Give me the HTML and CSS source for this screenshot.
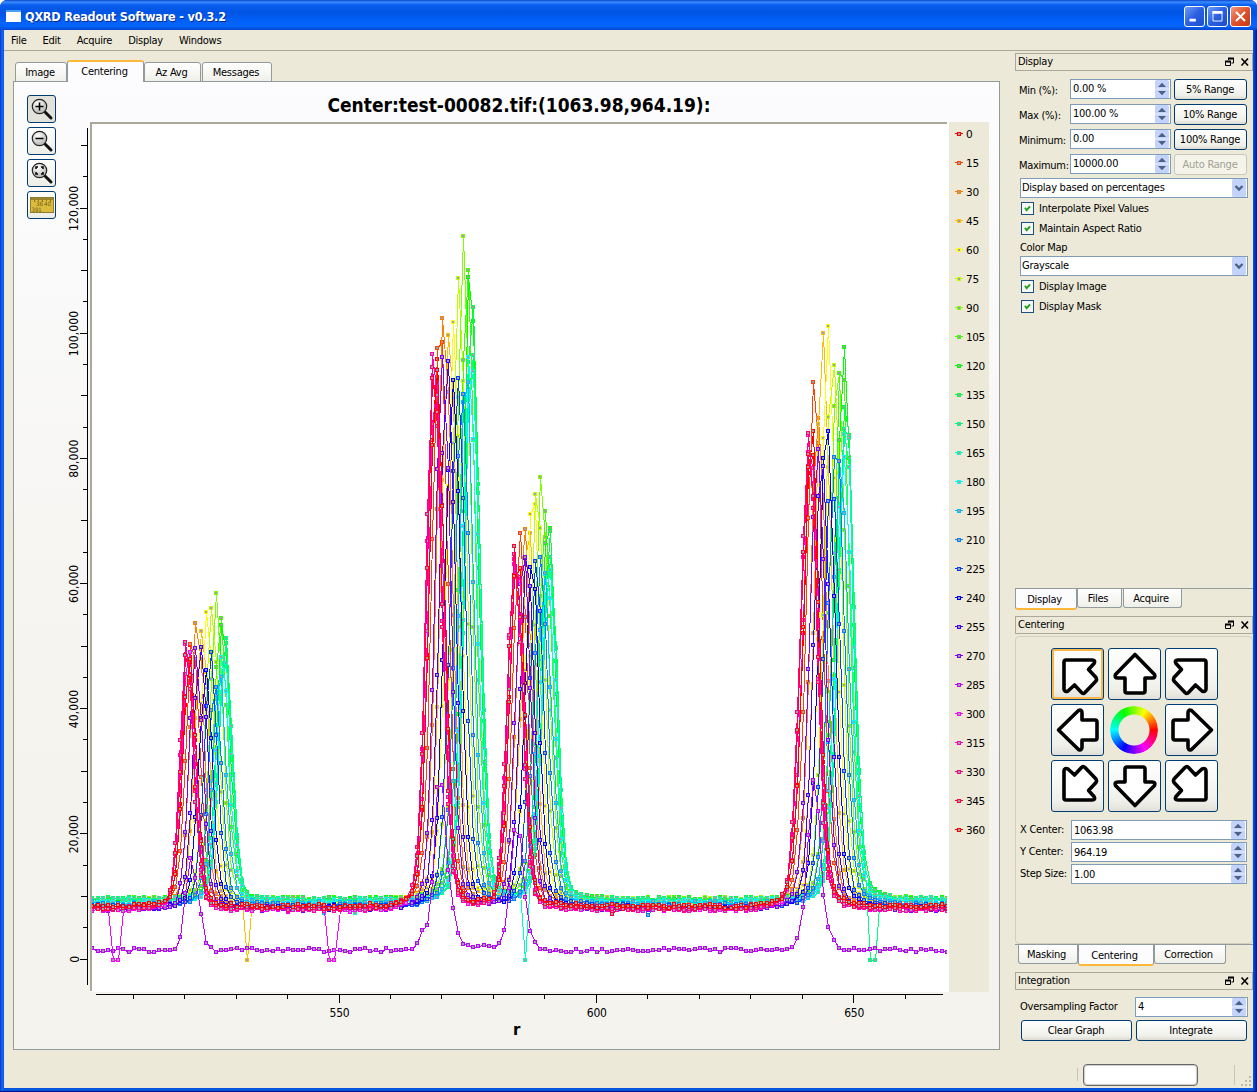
FILE: index.html
```html
<!DOCTYPE html>
<html lang="en">
<head>
<meta charset="utf-8">
<title>QXRD Readout Software - v0.3.2</title>
<link rel="stylesheet" href="styles.css">
</head>
<body>
<svg class="defs" width="0" height="0">
  <defs>
    <radialGradient id="lens" cx=".4" cy=".3" r=".8"><stop offset="0" stop-color="#fff"/><stop offset="1" stop-color="#a8a8a4"/></radialGradient>
    <symbol id="glass" viewBox="0 0 24 24">
      <path d="M14.5 14.5 21 21" stroke="#111" stroke-width="3" stroke-linecap="round"/>
      <circle cx="9.5" cy="9.5" r="7.2" fill="url(#lens)" stroke="#222" stroke-width="1.2"/>
    </symbol>
    <symbol id="arrow" viewBox="0 0 48 48"><path d="M24 4.5 43.500 24.5Q45 28 41 28H34V41Q34 43 32 43H16Q14 43 14 41V28H7Q3 28 4.500 24.5Z" fill="#fff" stroke="#000" stroke-width="3.600" stroke-linejoin="round"/></symbol>
    <symbol id="diag" viewBox="0 0 48 48"><path d="M12 10H38Q42 10 40 13.500L34.500 19.500 42 27.500Q43 29.500 42 31L31 42.500Q29 44.500 27.500 42.500L20.500 35 14 41Q10 42.500 10 39V12Q10 10 12 10Z" fill="#fff" stroke="#000" stroke-width="3.600" stroke-linejoin="round"/></symbol>
    <symbol id="dockicons" viewBox="0 0 24 10">
      <path d="M3.500 3V1.500H8.500V6H6.500M.5 4.500H5.500V8.500H.5Z" fill="none" stroke="#000"/>
      <path d="M3 1.500H9M0 4.500H6" stroke="#000" stroke-width="2"/>
      <path d="M16.500 1.500 23 8.500M23 1.500 16.500 8.500" stroke="#000" stroke-width="1.600"/>
    </symbol>
    <symbol id="spin" viewBox="0 0 14 18">
      <path d="M0 1.500Q0 0 1.500 0H12.500Q14 0 14 1.500V16.500Q14 18 12.500 18H1.500Q0 18 0 16.500Z" fill="#c3d3fb"/>
      <path d="M0 9H14" stroke="#e8eefe"/>
      <path d="M3 7 7 2.800 11 7ZM3 11 7 15.200 11 11Z" fill="#4d6185"/>
    </symbol>
    <symbol id="drop" viewBox="0 0 14 18">
      <rect width="14" height="18" rx="1.500" fill="#c3d3fb"/>
      <path d="M3.500 7 7 10.500 10.500 7" fill="none" stroke="#4d6185" stroke-width="2.400"/>
    </symbol>
    <symbol id="check" viewBox="0 0 13 13"><path d="M3 5 5 8 9 3.500" fill="none" stroke="#21a121" stroke-width="2.200" transform="translate(.5 .5)"/></symbol>
  </defs>
</svg>
<div class="window">
  <header class="titlebar">
    <span class="appicon"></span><h1>QXRD Readout Software - v0.3.2</h1>
    <div class="winbtns">
      <svg viewBox="0 0 21 21"><path d="M5 14.500H12" stroke="#fff" stroke-width="3"/></svg>
      <svg viewBox="0 0 21 21"><path d="M5.500 5.500H15.500V15.500H5.500Z" fill="none" stroke="#fff"/><path d="M5 6H16" stroke="#fff" stroke-width="3"/></svg>
      <svg class="close" viewBox="0 0 21 21"><path d="M5.500 5.500 15.500 15.500M15.500 5.500 5.500 15.500" stroke="#fff" stroke-width="2.200"/></svg>
    </div>
  </header>
  <div class="client">
    <nav class="menubar"><span>File</span><span>Edit</span><span>Acquire</span><span>Display</span><span>Windows</span></nav>
    <div class="body">
      <main class="central">
        <div class="tabs"><span class="tab t-image">Image</span><span class="tab active t-center">Centering</span><span class="tab t-az">Az Avg</span><span class="tab t-msg">Messages</span></div>
        <section class="pane">
          <div class="toolbar">
            <button class="tool on"><svg width="24" height="24"><use href="#glass"/><path d="M5.500 9.500H13.500M9.500 5.500V13.500" stroke="#000" stroke-width="1.600"/></svg></button>
            <button class="tool"><svg width="24" height="24"><use href="#glass"/><path d="M5.500 9.500H13.500" stroke="#000" stroke-width="1.600"/></svg></button>
            <button class="tool"><svg width="24" height="24"><use href="#glass"/><path d="M6 8V6H8M11 6H13V8M13 11V13H11M8 13H6V11" fill="none" stroke="#000" stroke-width="1.500"/></svg></button>
            <button class="tool"><svg width="24" height="24"><rect x=".5" y="4.500" width="23" height="15" fill="#dcba3c" stroke="#8f7d2b"/><path d="M1 6H23" stroke="#9c8630" stroke-width="2"/><path d="M4.500 6V9M8.500 6V8M12.500 6V9M16.500 6V8M20.500 6V9" stroke="#85742a"/><text x="6" y="12.500" class="rule">36</text><text x="14" y="12.500" class="rule">40</text><text x="1.500" y="18.500" class="rule">391</text></svg></button>
          </div>
          <svg id="plot" class="plot" width="930" height="950" viewBox="60 92 930 950"></svg>
        </section>
      </main>
      <aside class="docks">
        <div class="dockhead"><span>Display</span><svg width="24" height="10"><use href="#dockicons"/></svg></div>
        <section class="display">
          <div class="range"><label>Min (%):</label><div class="field">0.00 %<svg><use href="#spin"/></svg></div><button class="push">5% Range</button></div>
          <div class="range"><label>Max (%):</label><div class="field">100.00 %<svg><use href="#spin"/></svg></div><button class="push">10% Range</button></div>
          <div class="range"><label>Minimum:</label><div class="field">0.00<svg><use href="#spin"/></svg></div><button class="push">100% Range</button></div>
          <div class="range"><label>Maximum:</label><div class="field">10000.00<svg><use href="#spin"/></svg></div><button class="push off">Auto Range</button></div>
          <div class="field combo">Display based on percentages<svg><use href="#drop"/></svg></div>
          <div class="checkrow"><svg><use href="#check"/></svg>Interpolate Pixel Values</div>
          <div class="checkrow"><svg><use href="#check"/></svg>Maintain Aspect Ratio</div>
          <div class="caption">Color Map</div>
          <div class="field combo">Grayscale<svg><use href="#drop"/></svg></div>
          <div class="checkrow"><svg><use href="#check"/></svg>Display Image</div>
          <div class="checkrow"><svg><use href="#check"/></svg>Display Mask</div>
        </section>
        <div class="btabs"><span class="btab active b-disp">Display</span><span class="btab b-files">Files</span><span class="btab b-acq">Acquire</span></div>
        <div class="dockhead"><span>Centering</span><svg width="24" height="10"><use href="#dockicons"/></svg></div>
        <section class="centering">
          <div class="pad">
            <button class="dir focus"><svg><use href="#diag"/></svg></button>
            <button class="dir"><svg><use href="#arrow"/></svg></button>
            <button class="dir"><svg class="fliph"><use href="#diag"/></svg></button>
            <button class="dir"><svg class="left"><use href="#arrow"/></svg></button>
            <div class="wheel"></div>
            <button class="dir"><svg class="right"><use href="#arrow"/></svg></button>
            <button class="dir"><svg class="flipv"><use href="#diag"/></svg></button>
            <button class="dir"><svg class="down"><use href="#arrow"/></svg></button>
            <button class="dir"><svg class="down"><use href="#diag"/></svg></button>
          </div>
          <div class="coord"><label>X Center:</label><div class="field">1063.98<svg><use href="#spin"/></svg></div></div>
          <div class="coord"><label>Y Center:</label><div class="field">964.19<svg><use href="#spin"/></svg></div></div>
          <div class="coord"><label>Step Size:</label><div class="field">1.00<svg><use href="#spin"/></svg></div></div>
        </section>
        <div class="btabs second"><span class="btab b-mask">Masking</span><span class="btab active b-cent">Centering</span><span class="btab b-corr">Correction</span></div>
        <div class="dockhead"><span>Integration</span><svg width="24" height="10"><use href="#dockicons"/></svg></div>
        <section class="integration">
          <div class="over"><label>Oversampling Factor</label><div class="field">4<svg><use href="#spin"/></svg></div></div>
          <div class="pair"><button class="push">Clear Graph</button><button class="push">Integrate</button></div>
        </section>
      </aside>
    </div>
    <footer class="status"><i class="sep"></i><div class="progress"></div><i class="sep tall"></i>
      <svg class="grip" width="12" height="12"><path d="M8 1h2v2H8zM4 5h2v2H4zM8 5h2v2H8zM0 9h2v2H0zM4 9h2v2H4zM8 9h2v2H8z" fill="#bdb9a8"/></svg></footer>
  </div>
</div>
<script src="plot.js"></script>
</body>
</html>
```
FILE: styles.css
```css
* { box-sizing: border-box; }
body {
  margin: 0;
  width: 1257px;
  height: 1092px;
  overflow: hidden;
  font: 11px/14px "DejaVu Sans Condensed", "DejaVu Sans", sans-serif;
  font-stretch: condensed;
  letter-spacing: -0.25px;
  color: #000;
  background: #fff;
}
button { font: inherit; letter-spacing: inherit; padding: 0; margin: 0; color: inherit; }
.defs { display: block; height: 0; position: absolute; }
.window {
  height: 1092px;
  display: flex;
  flex-direction: column;
  background: linear-gradient(90deg, #0831d9 0, #166aee 2px, #0855dd 4px, #0855dd 1253px, #0046d8 1254px, #00138c 1257px);
  border-radius: 7px 7px 0 0;
  border-bottom: 1px solid #00138c;
  overflow: hidden;
}
.titlebar {
  height: 30px;
  display: flex;
  align-items: center;
  padding: 3px 6px 0 6px;
  background: linear-gradient(#0946c8 0, #3a8cff 2px, #0a5eee 5px, #0054e3 12px, #0060f8 20px, #0566ff 26px, #0347cf 30px);
}
.appicon { width: 15px; height: 12px; background: #fff; border-top: 2px solid #4aa0f0; margin-top: -2px; }
h1 {
  margin: 0 0 0 4px;
  font: bold 12.500px/16px "DejaVu Sans Condensed", "DejaVu Sans", sans-serif;
  font-stretch: condensed;
  letter-spacing: -0.180px;
  color: #fff;
  text-shadow: 1px 1px #0a2a90;
  flex: 1;
}
.winbtns { display: flex; gap: 2px; }
.winbtns svg { width: 21px; height: 21px; border: 1px solid #fff; border-radius: 3px; background: linear-gradient(135deg, #6f9cf6, #2a5fe0 50%, #1c4fd0); }
.winbtns .close { background: linear-gradient(135deg, #f09b80, #e0522c 50%, #c83a14); }
.client {
  flex: 1;
  margin: 0 4px 3px 4px;
  background: #ece9d8;
  display: flex;
  flex-direction: column;
}
.menubar { height: 21px; border-bottom: 1px solid #aca899; display: flex; gap: 16px; padding: 4px 7px 2px; }
.body { height: 999px; display: flex; justify-content: space-between; }
.central { width: 987px; margin-left: 9px; display: flex; flex-direction: column; }
.tabs { height: 31px; padding: 9px 0 0 2px; display: flex; align-items: flex-end; z-index: 1; margin-bottom: -1px; }
.tab {
  height: 20px;
  border: 1px solid #919b9c;
  border-radius: 3px 3px 0 0;
  background: linear-gradient(#fff, #f0f0ea);
  text-align: center;
  line-height: 20px;
  padding-right: 2px;
}
.tab.active { height: 22px; background: #fcfcfe; border-bottom: 0; border-top: 2px solid #fdb83a; line-height: 19px; }
.t-image { width: 52px; }
.t-center { width: 77px; }
.t-az { width: 57px; }
.t-msg { width: 70px; margin-left: 1px; }
.pane {
  flex: 1;
  border: 1px solid #919b9c;
  background: linear-gradient(#fcfcfe, #f4f3ee 70%);
  display: flex;
  padding-top: 10px;
}
.toolbar { width: 46px; padding: 3px 0 0 13px; display: flex; flex-direction: column; gap: 4px; }
.tool { width: 29px; height: 28px; border: 1px solid #003c74; border-radius: 3px; background: linear-gradient(#fff, #edede6); display: flex; align-items: center; justify-content: center; }
.tool.on { background: #e3e2da; }
.rule { font: 6px "DejaVu Sans Condensed", sans-serif; fill: #6e5f1f; letter-spacing: 0; }
.plot { display: block; }
.plot .title { font: bold 19px "DejaVu Sans Condensed", "DejaVu Sans", sans-serif; font-stretch: condensed; letter-spacing: 0; }
.plot .tick { font: 12px "DejaVu Sans Condensed", "DejaVu Sans", sans-serif; font-stretch: condensed; }
.plot .leg { font: 10.500px "DejaVu Sans", sans-serif; }
.plot .axis { font: bold 15px "DejaVu Sans", sans-serif; }
.docks { width: 238px; padding-top: 2px; display: flex; flex-direction: column; }
.dockhead { height: 18px; border: 1px solid #aca899; display: flex; align-items: center; justify-content: space-between; padding: 0 3px 0 2px; flex: none; }
.display { height: 517px; padding: 8px 5px 0 5px; }
.range { height: 25px; display: flex; }
.range:nth-child(4) { height: 24px; }
.range label { width: 50px; line-height: 23px; white-space: nowrap; letter-spacing: -0.3px; padding-left: 0; margin-left: -1px; margin-right: 1px; }
.field {
  height: 20px;
  border: 1px solid #7f9db9;
  background: #fff;
  display: flex;
  justify-content: space-between;
  padding: 0 1px 0 2px;
  line-height: 18px;
  flex: 1;
}
.field svg { width: 14px; height: 18px; }
.range .field { width: 101px; flex: none; }
.push { width: 73px; height: 21px; margin-left: 3px; border: 1px solid #003c74; border-radius: 3px; background: linear-gradient(#fff, #f0f0ea 80%, #dcdad0); padding: 1px 1px 0 0; }
.push.off { border-color: #c9c7ba; color: #a1a192; background: #f5f4ea; }
.combo { flex: none; width: 228px; margin-bottom: 1px; padding-left: 1px; }
.checkrow { height: 20px; display: flex; align-items: center; gap: 5px; padding-left: 1px; }
.checkrow svg { width: 13px; height: 13px; border: 1px solid #1c5180; background: #f6f6f2; margin-top: -1px; }
.caption { height: 17px; line-height: 17px; letter-spacing: -0.3px; }
.btabs { height: 28px; border-top: 1px solid #919b9c; display: flex; align-items: flex-start; flex: none; }
.btab { height: 19px; border: 1px solid #919b9c; border-top: 0; border-radius: 0 0 3px 3px; background: linear-gradient(#fff, #f0f0ea); text-align: center; line-height: 19px; padding-right: 3px; }
.btab.active { height: 21px; background: #fcfcfe; border-bottom: 2px solid #fdb83a; line-height: 21px; }
.b-disp { width: 62px; }
.b-files { width: 45px; }
.b-acq { width: 59px; margin-left: 1px; }
.b-mask { width: 60px; }
.b-cent { width: 76px; }
.b-corr { width: 72px; }
.second { padding-left: 3px; }
.centering { height: 308px; margin-top: 2px; border: 1px solid #d0d0bf; border-radius: 4px; padding: 11px 5px 0 4px; flex: none; }
.pad { display: grid; grid-template-columns: repeat(3, 53px); grid-auto-rows: 52px; gap: 4px; justify-content: center; height: 172px; padding-left: 2px; }
.dir { border: 1px solid #003c74; border-radius: 3px; background: linear-gradient(#fff, #f0f0ea 80%, #e2e0d8); display: flex; align-items: center; justify-content: center; }
.dir svg { width: 48px; height: 48px; }
.dir.focus { box-shadow: inset 0 0 0 2px #f9b94a; }
.fliph { transform: scaleX(-1); }
.flipv { transform: scaleY(-1); }
.down { transform: rotate(180deg); }
.left { transform: rotate(-90deg); }
.right { transform: rotate(90deg); }
.wheel { width: 48px; height: 48px; margin: 2px; border-radius: 50%; background: conic-gradient(from 90deg, #f00, #f0f, #00f, #0ff, #0f0, #ff0, #f00); -webkit-mask: radial-gradient(circle, transparent 15px, #000 16px); mask: radial-gradient(circle, transparent 15px, #000 16px); }
.coord { height: 22px; display: flex; }
.coord label { width: 51px; line-height: 19px; white-space: nowrap; }
.coord .field { line-height: 19px; }
.integration { padding: 7px 5px 0 5px; }
.over { display: flex; height: 23px; }
.over label { width: 115px; line-height: 20px; }
.pair { display: flex; gap: 4px; padding-left: 1px; }
.pair .push { width: 111px; margin: 0; }
.status { flex: 1; display: flex; align-items: center; padding: 11px 0 0 1073px; }
.sep { width: 1px; height: 13px; background: #c8c5b4; }
.sep.tall { height: 20px; margin-left: 36px; }
.progress { width: 115px; height: 22px; margin-left: 5px; border: 1px solid #686868; border-radius: 4px; background: #fff; box-shadow: inset 0 0 1px 1px #ccc; }
.grip { margin: 12px 0 0 6px; }
```
FILE: plot.js
```js
(function () {
  var out = [];
  var X = function (r) { return 339.5 + (r - 550) * 5.146; };
  var Y = function (v) { return 959.5 - v * 0.006258; };
  var seed = 7;
  function rnd() { seed = (seed * 16807) % 2147483647; return seed / 2147483647 - 0.5; }

  // Peak tops as screen heights, one for each 15 degree sector from 0 to 360.
  var tops = [
    [650, 633, 615, 626, 600, 593, 600, 605, 616, 628, 640, 645, 655, 665, 675, 650, 664, 638, 648, 0, 644, 646, 642, 650, 650],
    [350, 315, 315, 318, 338, 284, 245, 250, 272, 300, 330, 348, 350, 370, 376, 362, 362, 358, 356, 0, 354, 350, 338, 348, 352],
    [546, 544, 524, 522, 480, 480, 474, 502, 508, 532, 556, 558, 560, 570, 558, 564, 550, 553, 546, 0, 546, 546, 546, 546, 548],
    [430, 390, 400, 345, 344, 338, 368, 352, 350, 392, 410, 430, 440, 442, 440, 470, 432, 440, 440, 0, 436, 436, 426, 430, 432]
  ];
  var mids = [205.8, 452.8, 532, 827], swing = [19.5, 19.5, 17.8, 19], widths = [6.7, 7.5, 7.2, 8];
  // Points of the partly shaded 285 degree sector.
  var low = { 519: 937, 520: 893, 521: 858, 522: 878, 523: 914, 524: 943, 525: 947, 565: 943, 566: 930, 567: 925, 568: 882, 569: 787, 570: 785, 571: 870, 572: 908, 573: 933, 574: 944, 581: 943, 582: 930, 583: 888, 584: 830, 585: 836, 586: 897, 587: 931, 588: 942, 638: 947, 639: 938, 640: 907, 641: 835, 642: 780, 643: 811, 644: 895, 645: 927, 646: 940, 647: 948 };
  var drops = { 45: { 532: 0 }, 300: { 506: 0, 507: 0, 548: 0, 549: 0 }, 165: { 586: 0, 553: 7500 }, 150: { 653: 0, 654: 0 }, 195: { 547: 7400 }, 210: { 610: 7100 }, 345: { 603: 7300 } };

  function color(a) {
    var f = function (n) {
      var k = (n + a / 60) % 6;
      return Math.round(255 * (1 - Math.max(0, Math.min(k, 4 - k, 1))));
    };
    return 'rgb(' + f(5) + ',' + f(3) + ',' + f(1) + ')';
  }
  function marks(p, o, s) {
    return p.map(function (q) { return 'M' + (q[0] - o) + ' ' + (q[1] - o) + 'h' + s + 'v' + s + 'h-' + s + 'z'; }).join('');
  }
  function line(x1, y1, x2, y2) { out.push('<path d="M' + x1 + ' ' + y1 + 'L' + x2 + ' ' + y2 + '" stroke="#000"/>'); }
  function text(x, y, cls, s, extra) { out.push('<text x="' + x + '" y="' + y + '" class="' + cls + '" ' + (extra || '') + '>' + s + '</text>'); }

  out.push('<defs><clipPath id="area"><rect x="92" y="124" width="855" height="867"/></clipPath></defs>');
  out.push('<rect x="90" y="122" width="859" height="870" fill="#fff"/><path d="M90 991V122H947V124H92V991Z" fill="#aca899"/>');
  out.push('<rect x="949" y="122" width="40" height="870" fill="#ece9d8"/>');
  text(519, 112, 'title', 'Center:test-00082.tif:(1063.98,964.19):', 'text-anchor="middle" textLength="383"');

  out.push('<g clip-path="url(#area)" shape-rendering="crispEdges">');
  for (var i = 0; i <= 24; i++) {
    var a = i * 15, pts = [], c = color(a);
    var wave = Math.cos((a - 148) * Math.PI / 180);
    var base = 904 - 5 * Math.cos((a - 115) * Math.PI / 180) + (a > 195 && a < 330 ? 0.5 : 0);
    for (var r = 501; r <= 669; r++) {
      var x = X(r), y;
      if (a === 285) {
        y = low[r] || 950 + rnd() * 4;
        if (r > 574 && r < 581) y = 946 + rnd() * 2;
      } else {
        y = base + rnd() * 4.5;
        for (var k = 0; k < 4; k++) {
          var d = (x - mids[k] - swing[k] * wave) / widths[k];
          var shape = 0.78 * Math.exp(-d * d / 2) + 0.22 / (1 + d * d * 0.75) * Math.exp(-d * d / 70);
          y -= (base - tops[k][i]) * shape * (1 + (Math.abs(d) < 2.5 ? rnd() * 0.08 : 0));
        }
        if (drops[a] && drops[a][r] !== undefined) y = Y(drops[a][r]);
      }
      pts.push([Math.round(x), Math.round(y)]);
    }
    out.push('<polyline fill="none" stroke="' + c + '" points="' + pts.map(function (q) { return (q[0] + 0.5) + ',' + (q[1] + 0.5); }).join(' ') + '"/>');
    out.push('<path fill="' + c + '" d="' + marks(pts, 2, 4) + '"/><path fill="#a0a0a4" d="' + marks(pts, 1, 2) + '"/>');
  }
  out.push('</g><g shape-rendering="crispEdges">');

  line(87.5, 128, 87.5, 985);
  for (var v = 0; v <= 130000; v += 5000) {
    var ty = Math.round(Y(v)) - 0.5;
    line(v % 20000 === 0 ? 80 : v % 10000 === 0 ? 81 : 83, ty, 87, ty);
  }
  line(96, 994.5, 943, 994.5);
  for (var t = 510; t <= 660; t += 10) {
    var tx = Math.round(X(t)) - 0.5;
    line(tx, 995, tx, t % 50 === 0 ? 1003 : 999);
  }
  for (var n = 0; n <= 24; n++) {
    var ly = 134 + n * 29, lc = color(n * 15);
    out.push('<path d="M955 ' + (ly - 0.5) + 'H963" stroke="' + lc + '"/><path fill="' + lc + '" d="M957 ' + (ly - 2) + 'h4v4h-4z"/><path fill="#a0a0a4" d="M958 ' + (ly - 1) + 'h2v2h-2z"/>');
  }
  out.push('</g>');
  for (var m = 0; m <= 24; m++) text(966, 138 + m * 29, 'leg', m * 15, m > 6 ? 'textLength="19"' : '');
  [0, 20, 40, 60, 80, 100, 120].forEach(function (q) {
    var yy = Y(q * 1000);
    text(78.5, yy, 'tick', q ? q + ',000' : '0', 'text-anchor="middle" transform="rotate(-90 78.5 ' + yy + ')"' + (q ? ' textLength="' + (q > 99 ? 45 : 38) + '"' : ''));
  });
  [550, 600, 650].forEach(function (q) { text(X(q), 1017, 'tick', q, 'text-anchor="middle"'); });
  text(513, 1035, 'axis', 'r');
  document.getElementById('plot').innerHTML = out.join('');
})();
```
